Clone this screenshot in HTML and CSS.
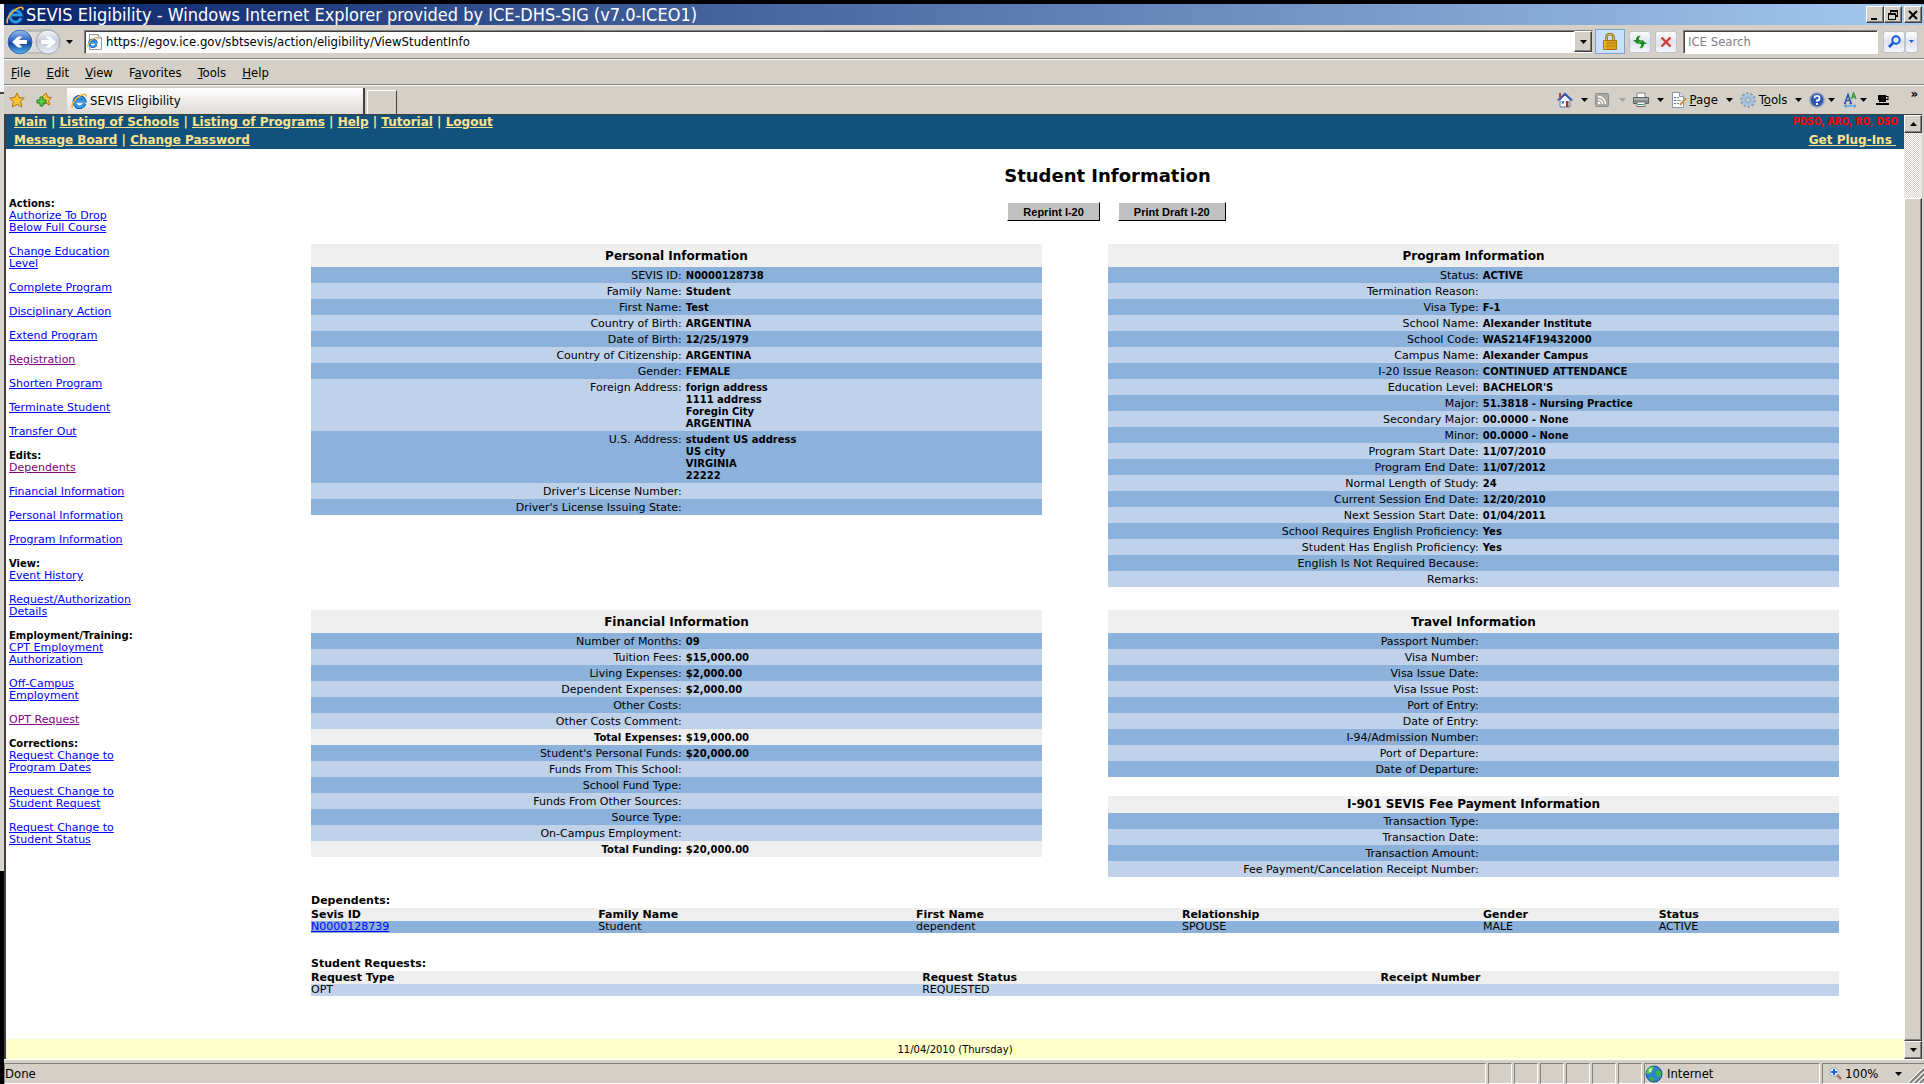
FILE: index.html
```html
<!DOCTYPE html>
<html lang="en">

<head>
  <meta charset="UTF-8">
  <meta name="viewport" content="width=device-width, initial-scale=1.0">
  <title>SEVIS Eligibility</title>
  <link rel="stylesheet" href="styles.css">
</head>

<body>
  <!-- shared icon -->
  <svg class="defs" width="0" height="0">
    <linearGradient id="blueBall" x1="0" y1="0" x2="0" y2="1">
      <stop offset="0" stop-color="#9cc0ec"/>
      <stop offset="0.45" stop-color="#2a63c0"/>
      <stop offset="0.55" stop-color="#174a9c"/>
      <stop offset="1" stop-color="#58b4f0"/>
    </linearGradient>
    <linearGradient id="greyBall" x1="0" y1="0" x2="0" y2="1">
      <stop offset="0" stop-color="#f4f6fa"/>
      <stop offset="0.5" stop-color="#c3cad6"/>
      <stop offset="1" stop-color="#eef2f8"/>
    </linearGradient>
    <symbol id="ie" viewBox="0 0 16 16">
      <path d="M13.6 10.6A5.3 5.3 0 1 1 13.7 7.9H5" fill="none" stroke="#0b4fa0" stroke-width="3.4"/>
      <path d="M13.3 10.6A5 5 0 1 1 13.4 8H5" fill="none" stroke="#2b9bea" stroke-width="2.2"/>
      <path d="M1.6 15.2C-0.6 13 3.6 5.6 9.3 2.6 12.4 0.6 15.6 0.4 14.9 3.6" fill="none" stroke="#f2b430" stroke-width="1.5"/>
    </symbol>
    <symbol id="arrow" viewBox="0 0 7 4">
      <path d="M0 0H7L3.5 4Z" fill="currentColor"/>
    </symbol>
  </svg>

  <div class="screen">
    <div class="behind"></div>

    <div class="window">
      <div class="titlebar">
        <svg class="ie-icon" width="18" height="18"><use href="#ie"/></svg>
        <span class="window-title">SEVIS Eligibility - Windows Internet Explorer provided by ICE-DHS-SIG (v7.0-ICEO1)</span>
        <button class="win-btn" aria-label="Minimize"><svg width="12" height="12"><path d="M2 9H8V11H2Z"/></svg></button>
        <button class="win-btn" aria-label="Restore"><svg width="12" height="12"><path d="M3 1H11V8H9V11H1V4H3ZM4 3V4H9V6H10V3ZM2 6V10H8V6Z" fill-rule="evenodd"/></svg></button>
        <button class="win-btn close" aria-label="Close"><svg width="12" height="12"><path d="M2 2L10 10M10 2L2 10" stroke="#000" stroke-width="2"/></svg></button>
      </div>

      <div class="navbar">
        <div class="history">
          <svg width="54" height="28" viewBox="0 0 54 28">
            <path d="M13 1H41A12.500 12.500 0 0 1 41 26H13Z" fill="#bdbbb6"/>
            <path d="M13 4H41V24H13Z" fill="#dcdad6"/>
            <circle cx="13" cy="14" r="13" fill="#eceae6"/>
            <circle cx="13" cy="14" r="12" fill="url(#blueBall)" stroke="#3f65a0"/>
            <path d="M19.500 12.500H11L14.500 9H11L5.500 14 11 19H14.500L11 15.500H19.500Z" fill="#fff" stroke="#fff"/>
            <circle cx="41" cy="14" r="12" fill="url(#greyBall)" stroke="#9aa2ae"/>
            <path d="M34.500 12.500H43L39.500 9H43L48.500 14 43 19H39.500L43 15.500H34.500Z" fill="#fff" stroke="#fff"/>
          </svg>
          <svg class="drop" width="7" height="4"><use href="#arrow"/></svg>
        </div>
        <div class="address">
          <svg width="16" height="18" viewBox="0 0 16 18">
            <path d="M2.500 1.500H11L14.500 5V16.500H2.500Z" fill="#fdfdfd" stroke="#9a9a9a"/>
            <path d="M11 1.500V5H14.500" fill="none" stroke="#9a9a9a"/>
            <use href="#ie" x="0" y="4" width="11" height="11"/>
          </svg>
          <input type="text" aria-label="Address" value="https://egov.ice.gov/sbtsevis/action/eligibility/ViewStudentInfo">
          <button class="combo" aria-label="Show address list"><svg width="7" height="4"><use href="#arrow"/></svg></button>
        </div>
        <button class="lock" aria-label="Security report">
          <svg width="14" height="17" viewBox="0 0 14 17">
            <path d="M3.500 8V4.500A3.500 3.500 0 0 1 10.500 4.500V8" fill="none" stroke="#8f6a14" stroke-width="2.600"/>
            <path d="M3.500 8V4.500A3.500 3.500 0 0 1 10.500 4.500V8" fill="none" stroke="#e3c261" stroke-width="1"/>
            <path d="M.5 7.500H13.500V16.500H.5Z" fill="#dda21c" stroke="#a87508"/>
            <path d="M1 10H13M1 13H13" stroke="#b98010"/>
            <path d="M2 8V16" stroke="#f5cf6a"/>
          </svg>
        </button>
        <button class="tool-btn" aria-label="Refresh">
          <svg width="14" height="14" viewBox="0 0 14 14" fill="#218a21"><path d="M4.500 9L0 5H3C3 2 5 0 8 1 6 1.500 6 3 6 5H9Z"/><path d="M9.500 5L14 9H11C11 12 9 14 6 13 8 12.500 8 11 8 9H5Z"/></svg>
        </button>
        <button class="tool-btn" aria-label="Stop">
          <svg width="12" height="12" viewBox="0 0 12 12"><path d="M1.500 1.500L10.500 10.500M10.500 1.500L1.500 10.500" stroke="#cf3a3a" stroke-width="2.400"/></svg>
        </button>
        <input class="search" type="text" aria-label="Search" placeholder="ICE Search">
        <div class="search-go">
          <button class="tool-btn" aria-label="Go"><svg width="13" height="13" viewBox="0 0 13 13"><circle cx="8" cy="5" r="3.700" fill="#dff0ff" stroke="#1a55e0" stroke-width="2"/><path d="M5 8L1 12" stroke="#1a55e0" stroke-width="2.600"/></svg></button>
          <button class="tool-btn small" aria-label="Search options"><svg width="5" height="3"><use href="#arrow"/></svg></button>
        </div>
      </div>

      <nav class="menubar">
        <button><u>F</u>ile</button>
        <button><u>E</u>dit</button>
        <button><u>V</u>iew</button>
        <button>F<u>a</u>vorites</button>
        <button><u>T</u>ools</button>
        <button><u>H</u>elp</button>
      </nav>

      <div class="tabbar">
        <button class="icon-btn" aria-label="Favorites Center">
          <svg width="16" height="16" viewBox="0 0 16 16"><path d="M8 1L10.200 5.600 15.300 6.100 11.600 9.700 12.700 15 8 12.400 3.300 15 4.400 9.700 .7 6.100 5.800 5.600Z" fill="#fcc233" stroke="#b06f14"/></svg>
        </button>
        <button class="icon-btn" aria-label="Add to Favorites">
          <svg width="16" height="16" viewBox="0 0 16 16"><path d="M10 1L11.600 5 15.500 5.500 12.700 8.500 13.500 13 10 11 6 13 6 5Z" fill="#fcc233" stroke="#b06f14"/><path d="M4 5H7V8H10V11H7V14H4V11H1V8H4Z" fill="#5fd04b" stroke="#1d7d1d"/></svg>
        </button>
        <div class="tab">
          <svg width="16" height="16"><use href="#ie"/></svg>
          <span>SEVIS Eligibility</span>
        </div>
        <button class="new-tab" aria-label="New Tab"></button>

        <div class="commands">
          <button aria-label="Home">
            <svg width="16" height="16" viewBox="0 0 16 16"><path d="M3 8V15H13V8L8 3Z" fill="#f3f5fb" stroke="#6d7691"/><path d="M0 8L8 0.500 16 8 14.500 9 8 3.500 1.500 9Z" fill="#3a58b5"/><path d="M2 1H4V5L2 6Z" fill="#b5462f"/><path d="M4.500 9H7V11.500H4.500Z" fill="#4d86cf"/><path d="M9 9H11.500V15H9Z" fill="#963c2a"/></svg>
            <svg class="drop" width="7" height="4"><use href="#arrow"/></svg>
          </button>
          <button class="off" aria-label="Feeds">
            <svg width="14" height="14" viewBox="0 0 14 14"><rect x=".5" y=".5" width="13" height="13" rx="1" fill="#a9a9a5" stroke="#8c8c88"/><circle cx="4" cy="10" r="1.300" fill="#fff"/><path d="M3 6.500A4.500 4.500 0 0 1 7.500 11M3 3.500A7.500 7.500 0 0 1 10.500 11" fill="none" stroke="#fff" stroke-width="1.500"/></svg>
            <svg class="drop" width="7" height="4"><use href="#arrow"/></svg>
          </button>
          <button aria-label="Print">
            <svg width="16" height="16" viewBox="0 0 16 16"><path d="M4 1H12V6H4Z" fill="#fff" stroke="#808080"/><path d="M.5 5.500H15.500V11.500H.5Z" fill="#8c8f94" stroke="#5c5f63"/><path d="M1 7H15" stroke="#c8cacd"/><path d="M4 10H12V14.500H4Z" fill="#fff" stroke="#707070"/><path d="M5 12.500H8" stroke="#3d7ed0"/><path d="M8 12.500H11" stroke="#43a843"/></svg>
            <svg class="drop" width="7" height="4"><use href="#arrow"/></svg>
          </button>
          <button>
            <svg width="16" height="16" viewBox="0 0 16 16"><path d="M1.500.5H8.500L12.500 4.500V15.500H1.500Z" fill="#fff" stroke="#8a93a8"/><path d="M8.500.5V4.500H12.500" fill="#dfe5f2" stroke="#8a93a8"/><path d="M3 5.500H5M3 8.500H5M3 11.500H5" stroke="#3c6fd0"/><path d="M6 5.500H8M6 8.500H10M6 11.500H8" stroke="#888"/><path d="M15 6L9 13" stroke="#c98e4a" stroke-width="2"/></svg>
            <span><u>P</u>age</span>
            <svg class="drop" width="7" height="4"><use href="#arrow"/></svg>
          </button>
          <button>
            <svg width="16" height="16" viewBox="0 0 16 16"><circle cx="8" cy="8" r="6.700" fill="none" stroke="#7f9db8" stroke-width="2" stroke-dasharray="2.600 1.600"/><circle cx="8" cy="8" r="4.300" fill="#e4eef6" stroke="#a4c2dc" stroke-width="3"/><circle cx="8" cy="8" r="2.500" fill="#d4d0c8" stroke="#7796b4"/></svg>
            <span>T<u>o</u>ols</span>
            <svg class="drop" width="7" height="4"><use href="#arrow"/></svg>
          </button>
          <button class="tight" aria-label="Help">
            <svg width="16" height="16" viewBox="0 0 16 16"><circle cx="8" cy="8" r="7" fill="#2c56b4" stroke="#8e9bb8" stroke-width="1.500"/><path d="M5.500 6.200A2.500 2.300 0 1 1 8 8.500V9.800" fill="none" stroke="#fff" stroke-width="1.800"/><path d="M7 11H9V13H7Z" fill="#fff"/></svg>
            <svg class="drop" width="7" height="4"><use href="#arrow"/></svg>
          </button>
          <button class="tight" aria-label="Text size">
            <svg width="13" height="16" viewBox="0 0 13 16"><path d="M0 11.500H2M1 11L4 2.500 7 11M5.500 11.500H8M2.300 8.500H6" fill="none" stroke="#2b50b0" stroke-width="1.500"/><path d="M7.500 7L9.500 1 12 7M8 5H11" fill="none" stroke="#38a038" stroke-width="1.500"/><path d="M0 14H12M2.500 12.500L.8 14 2.500 15.500M10 12.500L11.700 14 10 15.500" fill="none" stroke="#2a8fe0"/></svg>
            <svg class="drop" width="7" height="4"><use href="#arrow"/></svg>
          </button>
          <button aria-label="Research">
            <svg width="15" height="12" viewBox="0 0 15 12"><path d="M2 1H10V2H12.500V6H10V8H3V6H2ZM10 3V5H11.500V3Z" fill-rule="evenodd"/><path d="M0 9H13V11H0Z"/></svg>
          </button>
          <button class="more" aria-label="More">&raquo;</button>
        </div>
      </div>

      <div class="viewport">
        <div class="page">
          <header class="site-header">
            <div class="site-links">
              <a href="#">Main</a> | <a href="#">Listing of Schools</a> | <a href="#">Listing of Programs</a> | <a href="#">Help</a> | <a href="#">Tutorial</a> | <a href="#">Logout</a><br>
              <a href="#">Message Board</a> | <a href="#">Change Password</a>
            </div>
            <div class="site-user">
              <span class="roles">PDSO, ARO, RO, DSO</span>
              <a href="#">Get Plug-Ins&nbsp;</a>
            </div>
          </header>

          <div class="columns">
            <aside class="sidebar">
              <h2>Actions:</h2>
              <ul>
                <li><a href="#">Authorize To Drop<br>Below Full Course</a></li>
                <li><a href="#">Change Education<br>Level</a></li>
                <li><a href="#">Complete Program</a></li>
                <li><a href="#">Disciplinary Action</a></li>
                <li><a href="#">Extend Program</a></li>
                <li><a href="#" class="seen">Registration</a></li>
                <li><a href="#">Shorten Program</a></li>
                <li><a href="#">Terminate Student</a></li>
                <li><a href="#">Transfer Out</a></li>
              </ul>
              <h2>Edits:</h2>
              <ul>
                <li><a href="#" class="seen">Dependents</a></li>
                <li><a href="#">Financial Information</a></li>
                <li><a href="#">Personal Information</a></li>
                <li><a href="#">Program Information</a></li>
              </ul>
              <h2>View:</h2>
              <ul>
                <li><a href="#">Event History</a></li>
                <li><a href="#">Request/Authorization<br>Details</a></li>
              </ul>
              <h2>Employment/Training:</h2>
              <ul>
                <li><a href="#">CPT Employment<br>Authorization</a></li>
                <li><a href="#">Off-Campus<br>Employment</a></li>
                <li><a href="#" class="seen">OPT Request</a></li>
              </ul>
              <h2>Corrections:</h2>
              <ul>
                <li><a href="#">Request Change to<br>Program Dates</a></li>
                <li><a href="#">Request Change to<br>Student Request</a></li>
                <li><a href="#">Request Change to<br>Student Status</a></li>
              </ul>
            </aside>

            <main class="content">
              <h1>Student Information</h1>
              <div class="print-buttons">
                <button>Reprint I-20</button>
                <button>Print Draft I-20</button>
              </div>

              <div class="panels">
                <table class="panel">
                  <caption>Personal Information</caption>
                  <tbody>
                    <tr><th scope="row">SEVIS ID:</th><td>N0000128738</td></tr>
                    <tr><th scope="row">Family Name:</th><td>Student</td></tr>
                    <tr><th scope="row">First Name:</th><td>Test</td></tr>
                    <tr><th scope="row">Country of Birth:</th><td>ARGENTINA</td></tr>
                    <tr><th scope="row">Date of Birth:</th><td>12/25/1979</td></tr>
                    <tr><th scope="row">Country of Citizenship:</th><td>ARGENTINA</td></tr>
                    <tr><th scope="row">Gender:</th><td>FEMALE</td></tr>
                    <tr><th scope="row">Foreign Address:</th><td>forign address<br>1111 address<br>Foregin City<br>ARGENTINA</td></tr>
                    <tr><th scope="row">U.S. Address:</th><td>student US address<br>US city<br>VIRGINIA<br>22222</td></tr>
                    <tr><th scope="row">Driver's License Number:</th><td></td></tr>
                    <tr><th scope="row">Driver's License Issuing State:</th><td></td></tr>
                  </tbody>
                </table>

                <table class="panel">
                  <caption>Program Information</caption>
                  <tbody>
                    <tr><th scope="row">Status:</th><td>ACTIVE</td></tr>
                    <tr><th scope="row">Termination Reason:</th><td></td></tr>
                    <tr><th scope="row">Visa Type:</th><td>F-1</td></tr>
                    <tr><th scope="row">School Name:</th><td>Alexander Institute</td></tr>
                    <tr><th scope="row">School Code:</th><td>WAS214F19432000</td></tr>
                    <tr><th scope="row">Campus Name:</th><td>Alexander Campus</td></tr>
                    <tr><th scope="row">I-20 Issue Reason:</th><td>CONTINUED ATTENDANCE</td></tr>
                    <tr><th scope="row">Education Level:</th><td>BACHELOR'S</td></tr>
                    <tr><th scope="row">Major:</th><td>51.3818 - Nursing Practice</td></tr>
                    <tr><th scope="row">Secondary Major:</th><td>00.0000 - None</td></tr>
                    <tr><th scope="row">Minor:</th><td>00.0000 - None</td></tr>
                    <tr><th scope="row">Program Start Date:</th><td>11/07/2010</td></tr>
                    <tr><th scope="row">Program End Date:</th><td>11/07/2012</td></tr>
                    <tr><th scope="row">Normal Length of Study:</th><td>24</td></tr>
                    <tr><th scope="row">Current Session End Date:</th><td>12/20/2010</td></tr>
                    <tr><th scope="row">Next Session Start Date:</th><td>01/04/2011</td></tr>
                    <tr><th scope="row">School Requires English Proficiency:</th><td>Yes</td></tr>
                    <tr><th scope="row">Student Has English Proficiency:</th><td>Yes</td></tr>
                    <tr><th scope="row">English Is Not Required Because:</th><td></td></tr>
                    <tr><th scope="row">Remarks:</th><td></td></tr>
                  </tbody>
                </table>

                <table class="panel">
                  <caption>Financial Information</caption>
                  <tbody>
                    <tr><th scope="row">Number of Months:</th><td>09</td></tr>
                    <tr><th scope="row">Tuition Fees:</th><td>$15,000.00</td></tr>
                    <tr><th scope="row">Living Expenses:</th><td>$2,000.00</td></tr>
                    <tr><th scope="row">Dependent Expenses:</th><td>$2,000.00</td></tr>
                    <tr><th scope="row">Other Costs:</th><td></td></tr>
                    <tr><th scope="row">Other Costs Comment:</th><td></td></tr>
                  </tbody>
                  <tbody class="total">
                    <tr><th scope="row">Total Expenses:</th><td>$19,000.00</td></tr>
                  </tbody>
                  <tbody>
                    <tr><th scope="row">Student's Personal Funds:</th><td>$20,000.00</td></tr>
                    <tr><th scope="row">Funds From This School:</th><td></td></tr>
                    <tr><th scope="row">School Fund Type:</th><td></td></tr>
                    <tr><th scope="row">Funds From Other Sources:</th><td></td></tr>
                    <tr><th scope="row">Source Type:</th><td></td></tr>
                    <tr><th scope="row">On-Campus Employment:</th><td></td></tr>
                  </tbody>
                  <tbody class="total">
                    <tr><th scope="row">Total Funding:</th><td>$20,000.00</td></tr>
                  </tbody>
                </table>

                <div class="panel-stack">
                  <table class="panel">
                    <caption>Travel Information</caption>
                    <tbody>
                      <tr><th scope="row">Passport Number:</th><td></td></tr>
                      <tr><th scope="row">Visa Number:</th><td></td></tr>
                      <tr><th scope="row">Visa Issue Date:</th><td></td></tr>
                      <tr><th scope="row">Visa Issue Post:</th><td></td></tr>
                      <tr><th scope="row">Port of Entry:</th><td></td></tr>
                      <tr><th scope="row">Date of Entry:</th><td></td></tr>
                      <tr><th scope="row">I-94/Admission Number:</th><td></td></tr>
                      <tr><th scope="row">Port of Departure:</th><td></td></tr>
                      <tr><th scope="row">Date of Departure:</th><td></td></tr>
                    </tbody>
                  </table>
                  <table class="panel compact">
                    <caption>I-901 SEVIS Fee Payment Information</caption>
                    <tbody>
                      <tr><th scope="row">Transaction Type:</th><td></td></tr>
                      <tr><th scope="row">Transaction Date:</th><td></td></tr>
                      <tr><th scope="row">Transaction Amount:</th><td></td></tr>
                      <tr><th scope="row">Fee Payment/Cancelation Receipt Number:</th><td></td></tr>
                    </tbody>
                  </table>
                </div>
              </div>

              <div class="lists">
                <table class="list dependents">
                  <caption>Dependents:</caption>
                  <thead>
                    <tr><th>Sevis ID</th><th>Family Name</th><th>First Name</th><th>Relationship</th><th>Gender</th><th>Status</th></tr>
                  </thead>
                  <tbody>
                    <tr><td><a href="#">N0000128739</a></td><td>Student</td><td>dependent</td><td>SPOUSE</td><td>MALE</td><td>ACTIVE</td></tr>
                  </tbody>
                </table>

                <table class="list requests">
                  <caption>Student Requests:</caption>
                  <thead>
                    <tr><th>Request Type</th><th>Request Status</th><th>Receipt Number</th></tr>
                  </thead>
                  <tbody>
                    <tr><td>OPT</td><td>REQUESTED</td><td></td></tr>
                  </tbody>
                </table>
              </div>
            </main>
          </div>

          <footer class="site-footer">11/04/2010 (Thursday)</footer>
        </div>

        <div class="scrollbar">
          <button aria-label="Scroll up"><svg class="up" width="7" height="4"><use href="#arrow"/></svg></button>
          <div class="track"></div>
          <div class="thumb"></div>
          <button aria-label="Scroll down"><svg width="7" height="4"><use href="#arrow"/></svg></button>
        </div>
      </div>

      <div class="statusbar">
        <div class="pane message">Done</div>
        <div class="pane"></div>
        <div class="pane"></div>
        <div class="pane"></div>
        <div class="pane"></div>
        <div class="pane"></div>
        <div class="pane"></div>
        <div class="pane zone">
          <svg width="18" height="18" viewBox="0 0 18 18"><circle cx="9" cy="9" r="8" fill="#2f7fd6" stroke="#1c4f96"/><path d="M3 4C5 1 8 1 9 2 9 4 7 5 7 7 5 9 3 8 1.500 9 1.500 7 2 5 3 4Z" fill="#52d34b"/><path d="M11 6C13 4 15 5 16 7 17 10 15 13 13 12 11 11 12 9 10 8Z" fill="#37b53b"/><path d="M5 12C7 11 10 13 9 16 7 16.500 5 15.500 4 14Z" fill="#37b53b"/><path d="M4 4L7 3 6 7 4 7Z" fill="#d5f7c6"/></svg>
          Internet
        </div>
        <div class="pane zoom">
          <svg width="13" height="13" viewBox="0 0 13 13"><path d="M7 7L12 12" stroke="#a8744a" stroke-width="2.500"/><circle cx="5" cy="5" r="4.300" fill="#eaf4ff" stroke="#8fa6c8"/><path d="M5 2V8M2 5H8" stroke="#1d62d0" stroke-width="2"/></svg>
          <span>100%</span>
          <svg class="drop" width="7" height="4"><use href="#arrow"/></svg>
          <svg class="grip" width="16" height="16"><path d="M2 16L16 2M7 16L16 7M12 16L16 12" stroke="#808080" stroke-width="2"/><path d="M0 16L16 0M5 16L16 5M10 16L16 10" stroke="#fff"/></svg>
        </div>
      </div>
    </div>
  </div>
</body>

</html>
```
FILE: styles.css
```css
* {
  box-sizing: border-box;
}

body {
  margin: 0;
  background-color: #000000;
  font-family: Verdana, "DejaVu Sans", sans-serif;
  font-size: 11px;
  line-height: 12px;
  color: #000000;
}

button,
input {
  font: inherit;
  color: inherit;
  margin: 0;
  padding: 0;
}

button {
  border: none;
  background: none;
}

svg {
  display: block;
  flex: none;
}

.defs {
  position: absolute;
}

.screen {
  display: flex;
  min-height: 100vh;
  padding-top: 4px;
}

/* edge of the window underneath */
.behind {
  width: 4px;
  background: linear-gradient(#f4f6fb 88px, #404040 88px, #404040 90px, #d9d6d0 90px, #d9d6d0 867px, #000000 867px);
}

.window {
  flex: 1;
  display: flex;
  flex-direction: column;
  background-color: #d4d0c8;
}

/* browser chrome */
.titlebar,
.navbar,
.menubar,
.tabbar,
.statusbar {
  display: flex;
  align-items: center;
  font-family: Tahoma, "DejaVu Sans Condensed", "DejaVu Sans", sans-serif;
  font-size: 13px;
  line-height: 18px;
}

.titlebar {
  height: 21px;
  padding: 0 2px;
  background: linear-gradient(to right, #0a246a, #a6caf0);
  color: #ffffff;
}

.window-title {
  flex: 1;
  padding-left: 2px;
  font-size: 18px;
  line-height: 21px;
  white-space: nowrap;
}

.win-btn,
.combo,
.scrollbar button,
.thumb {
  display: flex;
  align-items: center;
  justify-content: center;
  background-color: #d4d0c8;
  border: 1px solid;
  border-color: #ffffff #404040 #404040 #ffffff;
  box-shadow: inset -1px -1px #808080;
}

.win-btn {
  width: 18px;
  height: 17px;
}

.close {
  margin-left: 2px;
}

.navbar {
  height: 34px;
  padding: 0 6px 0 3px;
  border-bottom: 1px solid #808080;
}

.history {
  display: flex;
  align-items: center;
  width: 77px;
}

.history .drop {
  margin-left: 5px;
}

.address {
  flex: 1;
  display: flex;
  align-items: center;
  height: 24px;
  padding-left: 2px;
  background-color: #ffffff;
  border: 1px solid;
  border-color: #808080 #d4d0c8 #d4d0c8 #808080;
  box-shadow: inset 1px 1px #404040;
}

.address input {
  flex: 1;
  height: 20px;
  padding-left: 3px;
  border: none;
  background: none;
}

.combo {
  width: 18px;
  height: 21px;
}

.lock {
  display: flex;
  align-items: center;
  justify-content: center;
  width: 30px;
  height: 25px;
  margin: 0 4px 0 2px;
  background-color: #c9dffc;
  border: 1px solid #7da2ce;
}

.tool-btn {
  display: flex;
  align-items: center;
  justify-content: center;
  width: 22px;
  height: 22px;
  margin-right: 4px;
  border: 1px solid #c0c4cc;
  border-radius: 3px;
  background: linear-gradient(#ffffff, #dde2ec 50%, #f4f6fa);
}

.search {
  width: 195px;
  height: 24px;
  margin-left: 2px;
  padding-left: 4px;
  border: 1px solid;
  border-color: #808080 #ffffff #ffffff #808080;
  box-shadow: inset 1px 1px #404040;
}

.search::placeholder {
  color: #808080;
  opacity: 1;
}

.search-go {
  display: flex;
  margin-left: 5px;
}

.search-go .tool-btn {
  margin: 0;
}

.search-go .small {
  width: 13px;
  color: #1a55e0;
}

.menubar {
  height: 26px;
  padding: 1px 0 0 7px;
  gap: 16px;
  border-top: 1px solid #ffffff;
  border-bottom: 1px solid #808080;
}

.tabbar {
  height: 29px;
  padding-left: 5px;
  border-top: 1px solid #ffffff;
}

.icon-btn {
  margin-right: 11px;
}

.tab {
  align-self: flex-end;
  display: flex;
  align-items: center;
  gap: 3px;
  width: 298px;
  height: 26px;
  margin-left: 4px;
  padding-left: 4px;
  background: linear-gradient(#ffffff, #dedbd5);
  border-right: 2px solid #404040;
}

.new-tab {
  align-self: flex-end;
  width: 30px;
  height: 24px;
  margin-left: 2px;
  border: 1px solid #ffffff;
  border-bottom: none;
  border-right: 1px solid #404040;
}

.commands {
  display: flex;
  align-items: center;
  margin-left: auto;
  padding-right: 6px;
}

.commands button {
  display: flex;
  align-items: center;
  gap: 8px;
  margin-right: 7px;
}

.commands span {
  margin-left: -5px;
}

.commands .off {
  gap: 10px;
}

.commands .off .drop {
  color: #a0a0a0;
}

.commands .tight {
  gap: 3px;
  margin-right: 9px;
}

.commands .more {
  align-self: flex-start;
  margin: -6px 0 0 12px;
  font-weight: bold;
}

/* page area */
.viewport {
  flex: 1;
  display: flex;
  margin-right: 2px;
  border-top: 1px solid #404040;
  border-left: 2px solid #404040;
}

.page {
  flex: 1;
  display: flex;
  flex-direction: column;
  background-color: #ffffff;
}

.site-header {
  display: flex;
  justify-content: space-between;
  align-items: flex-end;
  height: 34px;
  padding: 0 8px;
  overflow: hidden;
  background-color: #11517b;
  color: #ffe38c;
  font-size: 12px;
  font-weight: bold;
  line-height: 18px;
}

.site-header a {
  color: #ffe38c;
}

.site-user {
  display: flex;
  flex-direction: column;
  align-items: flex-end;
}

.roles {
  color: #ff0000;
  font-family: Tahoma, "DejaVu Sans Condensed", "DejaVu Sans", sans-serif;
  font-size: 10px;
  margin-right: -2px;
}

.columns {
  flex: 1;
  display: flex;
}

.sidebar {
  width: 305px;
  padding: 49px 3px 0;
}

.sidebar h2 {
  margin: 0;
  font-size: 10px;
  line-height: 12px;
}

.sidebar ul {
  margin: 0;
  padding: 0;
  list-style: none;
}

.sidebar li {
  margin-bottom: 12px;
}

a {
  color: #0000ff;
}

.seen {
  color: #800080;
}

.content {
  flex: 1;
  padding-top: 15px;
}

h1 {
  margin: 0;
  font-size: 18px;
  line-height: 24px;
  text-align: center;
}

.print-buttons {
  display: flex;
  justify-content: center;
  gap: 18px;
  margin: 14px 0 23px;
  padding-left: 18px;
}

.print-buttons button {
  height: 19px;
  padding: 0 15px;
  background-color: #c0c0c0;
  border: 1px solid;
  border-color: #ffffff #000000 #000000 #ffffff;
  font-family: Arial, "Liberation Sans", sans-serif;
  font-size: 11px;
  font-weight: bold;
}

.panels,
.lists {
  margin-right: 65px;
}

.panels {
  display: grid;
  grid-template-columns: 1fr 1fr;
  gap: 23px 66px;
  align-items: start;
}

.panel {
  width: 100%;
  table-layout: fixed;
  border-collapse: collapse;
}

.panel caption {
  padding: 4px 0 2px;
  background-color: #efefef;
  font-size: 12px;
  font-weight: bold;
  line-height: 17px;
}

.panel th,
.panel td {
  padding: 3px 2px 1px;
  vertical-align: top;
  text-align: left;
  font-size: 10px;
  font-weight: bold;
}

.panel th {
  width: 51%;
  text-align: right;
  font-size: 11px;
  font-weight: normal;
}

.panel tr:nth-child(odd) {
  background-color: #8cb1da;
}

.panel tr:nth-child(even) {
  background-color: #bfd2ea;
}

.panel .total tr {
  background-color: #efefef;
}

.panel .total th {
  font-size: 10px;
  font-weight: bold;
}

.panel-stack {
  display: grid;
  gap: 19px;
}

.compact caption {
  padding: 0;
}

.list {
  width: 100%;
  table-layout: fixed;
  border-collapse: collapse;
  margin-top: 24px;
}

.dependents {
  margin-top: 17px;
}

.list caption {
  font-size: 11px;
  font-weight: bold;
  line-height: 14px;
  text-align: left;
}

.list th {
  padding: 0;
  background-color: #efefef;
  font-size: 11px;
  line-height: 13px;
  text-align: left;
}

.list td {
  padding: 0;
}

.dependents tbody tr {
  background-color: #8cb1da;
}

.requests tbody tr {
  background-color: #bfd2ea;
}

.dependents th:nth-child(1) { width: 18.8%; }
.dependents th:nth-child(2) { width: 20.8%; }
.dependents th:nth-child(3) { width: 17.4%; }
.dependents th:nth-child(4) { width: 19.7%; }
.dependents th:nth-child(5) { width: 11.5%; }
.requests th:nth-child(1) { width: 40%; }
.requests th:nth-child(2) { width: 30%; }

.site-footer {
  padding-top: 1px;
  background-color: #ffffcc;
  font-size: 10px;
  line-height: 19px;
  text-align: center;
}

.scrollbar {
  display: flex;
  flex-direction: column;
  width: 18px;
}

.scrollbar button {
  height: 18px;
}

.up {
  transform: rotate(180deg);
}

.track {
  height: 65px;
  background: repeating-conic-gradient(#ffffff 0 25%, #d4d0c8 0 50%) 0 0 / 2px 2px;
}

.thumb {
  flex: 1;
}

.statusbar {
  align-items: stretch;
  gap: 2px;
  height: 25px;
  padding-top: 3px;
  border-top: 1px solid #ffffff;
}

.pane {
  display: flex;
  align-items: center;
  width: 24px;
  border: 1px solid;
  border-color: #808080 #ffffff #ffffff #808080;
}

.message {
  flex: 1;
}

.zone {
  width: 176px;
  gap: 4px;
}

.zoom {
  width: 102px;
  gap: 3px;
  padding-left: 6px;
  border-right: none;
}

.zoom .drop {
  margin-left: 14px;
}

.grip {
  align-self: flex-end;
  margin-left: auto;
}
```
